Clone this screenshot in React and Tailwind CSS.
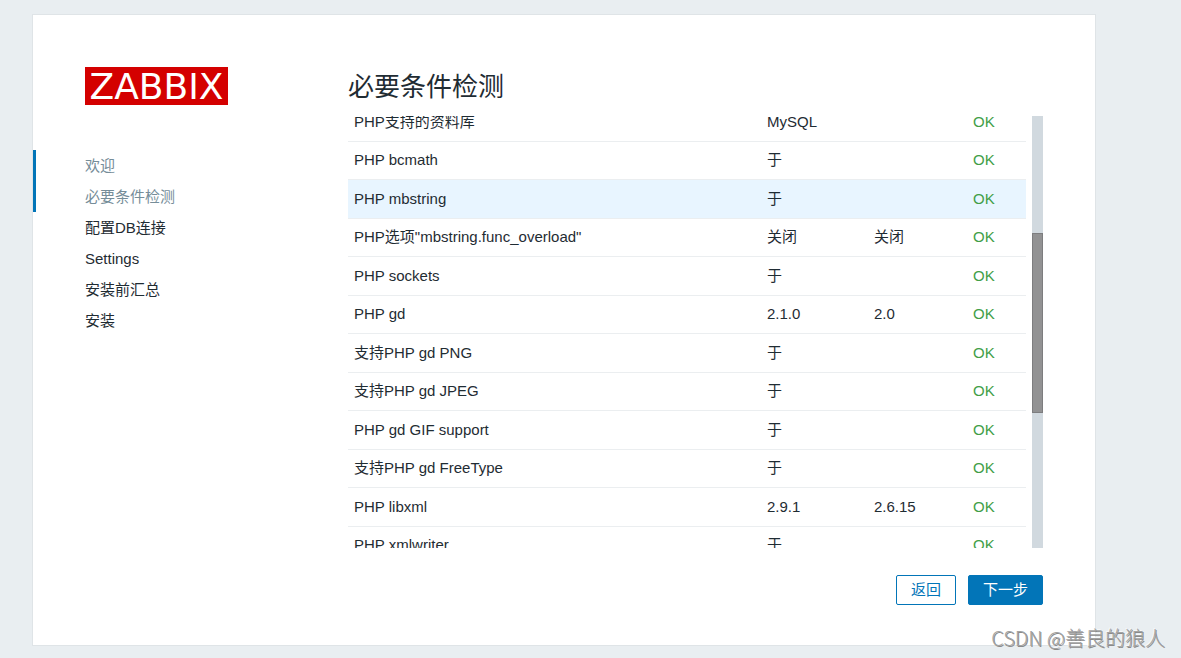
import React from 'react';
import clsx from 'clsx';

const STEPS = [
  { label: '欢迎', done: true },
  { label: '必要条件检测', done: true },
  { label: '配置DB连接' },
  { label: 'Settings' },
  { label: '安装前汇总' },
  { label: '安装' },
];

const CHECKS = [
  { name: 'PHP支持的资料库', current: 'MySQL', required: '' },
  { name: 'PHP bcmath', current: '于', required: '' },
  { name: 'PHP mbstring', current: '于', required: '', active: true },
  { name: 'PHP选项"mbstring.func_overload"', current: '关闭', required: '关闭' },
  { name: 'PHP sockets', current: '于', required: '' },
  { name: 'PHP gd', current: '2.1.0', required: '2.0' },
  { name: '支持PHP gd PNG', current: '于', required: '' },
  { name: '支持PHP gd JPEG', current: '于', required: '' },
  { name: 'PHP gd GIF support', current: '于', required: '' },
  { name: '支持PHP gd FreeType', current: '于', required: '' },
  { name: 'PHP libxml', current: '2.9.1', required: '2.6.15' },
  { name: 'PHP xmlwriter', current: '于', required: '' },
];

function Sidebar() {
  return (
    <aside className="w-[315px] shrink-0 pt-[52px]">
      <div className="ml-[52px] h-[38px] w-[143px] bg-[#d40000] text-center font-['DejaVu_Sans',sans-serif] text-[36px] leading-10 text-white">
        ZABBIX
      </div>
      <ul className="mt-[45px]">
        {STEPS.map((step) => (
          <li
            key={step.label}
            className={clsx(
              'border-l-3 pl-[49px] leading-[31px]',
              step.done ? 'border-[#0275b8] text-[#768d99]' : 'border-transparent'
            )}
          >
            {step.label}
          </li>
        ))}
      </ul>
    </aside>
  );
}

function CheckTable() {
  return (
    <div className="flex h-[432px] gap-1.5">
      <div className="min-w-0 flex-1 overflow-hidden">
        {/* list is scrolled partway, so the first row is cut at the top */}
        <table className="-mt-[13px] w-full table-fixed border-collapse">
          <colgroup>
            <col />
            <col className="w-[107px]" />
            <col className="w-[99px]" />
            <col className="w-[59px]" />
          </colgroup>
          <tbody>
            {CHECKS.map((check) => (
              <tr
                key={check.name}
                className={clsx(
                  'h-[39px] even:h-[38px] shadow-[inset_0_-1px_0_#ebeef0]',
                  check.active && 'bg-[#e8f5ff]'
                )}
              >
                <td className="px-1.5 pt-0 pb-0.5">{check.name}</td>
                <td className="px-1.5 pt-0 pb-0.5">{check.current}</td>
                <td className="px-1.5 pt-0 pb-0.5">{check.required}</td>
                <td className="px-1.5 pt-0 pb-0.5 text-[#429e47]">OK</td>
              </tr>
            ))}
          </tbody>
        </table>
      </div>
      <div className="w-[11px] bg-[#d1d9df] pt-[117px]">
        <div className="h-[180px] border border-[#7d7d7f] bg-[#929293]" />
      </div>
    </div>
  );
}

export default function App() {
  return (
    <div className="relative min-h-screen bg-[#e9eef1] pt-3.5 pr-[85px] pb-3 pl-8 font-['Liberation_Sans','Noto_Sans_CJK_SC',sans-serif] text-[15px] leading-5 text-[#1f2c33]">
      <div className="flex border border-[#dfe4e7] bg-white">
        <Sidebar />
        <main className="min-w-0 flex-1 pt-[52px] pr-[52px] pb-10">
          <h1 className="mb-[9px] text-[26px] leading-10">必要条件检测</h1>
          <CheckTable />
          <div className="mt-[27px] flex justify-end gap-3">
            <button
              type="button"
              className="h-[30px] w-[60px] rounded-xs border border-[#0275b8] bg-white text-[#0275b8]"
            >
              返回
            </button>
            <button
              type="button"
              className="h-[30px] w-[75px] rounded-xs border border-[#0275b8] bg-[#0275b8] text-white"
            >
              下一步
            </button>
          </div>
        </main>
      </div>
      <span className="absolute right-4 bottom-1.5 font-['Noto_Sans_CJK_SC',sans-serif] text-[20px] leading-7 font-light text-[#a3a3a3] [text-shadow:1px_1px_0_#8a8a8a,-1px_-1px_0_#ffffffaa]">
        CSDN @善良的狼人
      </span>
    </div>
  );
}
